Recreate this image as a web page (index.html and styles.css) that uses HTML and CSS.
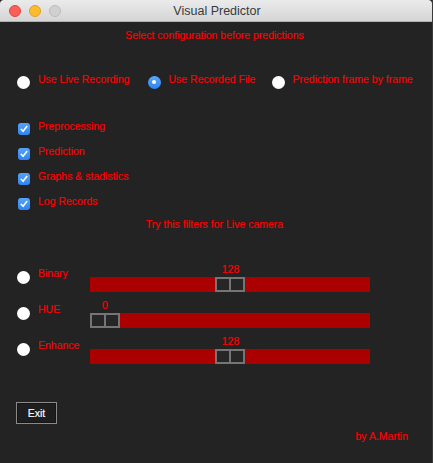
FILE: index.html
```html
<!DOCTYPE html>
<html>
<head>
<meta charset="utf-8">
<title>Visual Predictor</title>
<link rel="stylesheet" href="styles.css">
</head>
<body>
<div class="window">
  <header class="titlebar">
    <div class="lights">
      <span class="light red"></span>
      <span class="light yellow"></span>
      <span class="light gray"></span>
    </div>
    <div class="title">Visual Predictor</div>
    <div></div>
  </header>
  <main class="content">
    <p class="heading">Select configuration before predictions</p>

    <div class="modes">
      <div class="opt"><span class="radio"></span><span class="txt">Use Live Recording</span></div>
      <div class="opt"><span class="radio on"></span><span class="txt">Use Recorded File</span></div>
      <div class="opt"><span class="radio"></span><span class="txt">Prediction frame by frame</span></div>
    </div>

    <ul class="checks">
      <li class="check"><span class="box"><svg viewBox="0 0 12 12" width="12" height="12"><path d="M3.2 6.3 L5.1 8.3 L8.8 3.6" fill="none" stroke="#fff" stroke-width="1.6" stroke-linecap="round" stroke-linejoin="round"/></svg></span><span class="txt">Preprocessing</span></li>
      <li class="check"><span class="box"><svg viewBox="0 0 12 12" width="12" height="12"><path d="M3.2 6.3 L5.1 8.3 L8.8 3.6" fill="none" stroke="#fff" stroke-width="1.6" stroke-linecap="round" stroke-linejoin="round"/></svg></span><span class="txt">Prediction</span></li>
      <li class="check"><span class="box"><svg viewBox="0 0 12 12" width="12" height="12"><path d="M3.2 6.3 L5.1 8.3 L8.8 3.6" fill="none" stroke="#fff" stroke-width="1.6" stroke-linecap="round" stroke-linejoin="round"/></svg></span><span class="txt">Graphs &amp; stadistics</span></li>
      <li class="check"><span class="box"><svg viewBox="0 0 12 12" width="12" height="12"><path d="M3.2 6.3 L5.1 8.3 L8.8 3.6" fill="none" stroke="#fff" stroke-width="1.6" stroke-linecap="round" stroke-linejoin="round"/></svg></span><span class="txt">Log Records</span></li>
    </ul>

    <p class="heading filters-title">Try this filters for Live camera</p>

    <div class="filters">
      <div class="filter">
        <div class="filter-label"><span class="radio"></span><span class="txt">Binary</span></div>
        <div class="slider" style="--v: 128">
          <div class="value">128</div>
          <div class="trough"><div class="handle"></div></div>
        </div>
      </div>
      <div class="filter">
        <div class="filter-label"><span class="radio"></span><span class="txt">HUE</span></div>
        <div class="slider" style="--v: 0">
          <div class="value">0</div>
          <div class="trough"><div class="handle"></div></div>
        </div>
      </div>
      <div class="filter">
        <div class="filter-label"><span class="radio"></span><span class="txt">Enhance</span></div>
        <div class="slider" style="--v: 128">
          <div class="value">128</div>
          <div class="trough"><div class="handle"></div></div>
        </div>
      </div>
    </div>

    <button class="exit">Exit</button>
    <div class="author">by A.Martin</div>
  </main>
</div>
</body>
</html>
```

FILE: styles.css
```css
* { box-sizing: border-box; }

html, body {
  margin: 0;
  padding: 0;
  background: #232323;
}

body {
  font-family: "Liberation Sans", Arial, sans-serif;
  font-size: 10.5px;
  color: #ff0000;
}

.window {
  width: 433px;
  height: 463px;
  background: #232323;
  border-right: 1px solid #3a3a3a;
  overflow: hidden;
}

.titlebar {
  height: 22px;
  display: grid;
  grid-template-columns: 1fr auto 1fr;
  align-items: center;
  background: linear-gradient(#ebebeb, #d5d5d5);
  border-bottom: 1px solid #b1b1b1;
  border-radius: 4px 4px 0 0;
}

.lights {
  display: flex;
  gap: 8px;
  padding-left: 9px;
}

.light {
  width: 12px;
  height: 12px;
  border-radius: 50%;
}
.light.red { background: #fc5f57; border: 0.5px solid #de4640; }
.light.yellow { background: #fdbc2e; border: 0.5px solid #dea123; }
.light.gray { background: #d0d0d0; border: 0.5px solid #bcbcbc; }

.title {
  font-size: 12.5px;
  color: #3a3a3a;
  padding-left: 2px;
}

.content {
  padding: 6px 0 0 17px;
}

.heading {
  margin: 0;
  line-height: 14px;
  text-align: center;
  padding-right: 20px;
  -webkit-text-stroke: 0.15px #ff0000;
}

.txt {
  line-height: 13px;
  white-space: nowrap;
  -webkit-text-stroke: 0.15px #ff0000;
}

.modes {
  margin-top: 30.5px;
  display: grid;
  grid-template-columns: 130.5px 124px auto;
  align-items: start;
}

.opt {
  display: flex;
  align-items: flex-start;
  gap: 8px;
}

.radio {
  flex: none;
  width: 13px;
  height: 13px;
  border-radius: 50%;
  background: radial-gradient(circle at 50% 40%, #ffffff 55%, #ececec 100%);
  margin-top: 3px;
  display: flex;
  align-items: center;
  justify-content: center;
}

.radio.on {
  background: linear-gradient(#5aa8fb, #2e83f2);
}
.radio.on::after {
  content: "";
  width: 4px;
  height: 4px;
  border-radius: 50%;
  background: #fff;
}

.checks {
  list-style: none;
  margin: 31px 0 0 0;
  padding: 0 0 0 1px;
  display: flex;
  flex-direction: column;
  gap: 9.5px;
}

.check {
  display: flex;
  align-items: flex-start;
  gap: 8px;
}

.box {
  flex: none;
  width: 12px;
  height: 12px;
  border-radius: 3px;
  background: linear-gradient(#55a3fa, #2f84f2);
  margin-top: 3.5px;
  display: flex;
}

.filters-title {
  margin-top: 7px;
}

.filters {
  margin-top: 32px;
  display: flex;
  flex-direction: column;
  gap: 7px;
}

.filter {
  display: flex;
  align-items: flex-start;
}

.filter-label {
  width: 73px;
  display: flex;
  align-items: flex-start;
  gap: 8px;
}
.filter-label .radio { margin-top: 7.5px; }
.filter-label .txt { margin-top: 3.5px; }

.slider {
  width: 280px;
}

.value {
  width: 30px;
  margin-left: calc((100% - 30px) * var(--v) / 255);
  text-align: center;
  line-height: 13px;
  -webkit-text-stroke: 0.15px #ff0000;
}

.trough {
  margin-top: 1px;
  height: 15px;
  background: #aa0000;
  position: relative;
}

.handle {
  position: absolute;
  top: 0;
  left: calc((100% - 30px) * var(--v) / 255);
  width: 30px;
  height: 15px;
  border: 2px solid #757575;
  background: #262626;
}
.handle::after {
  content: "";
  position: absolute;
  left: 12px;
  top: 0;
  width: 2px;
  height: 11px;
  background: #757575;
}

.exit {
  display: block;
  margin: 38px 0 0 -1px;
  width: 41px;
  height: 22px;
  padding: 0;
  background: #1e1e1e;
  border: 1px solid #8a8a8a;
  box-shadow: inset 0 0 0 1px #151515;
  color: #ffffff;
  font-family: "Liberation Sans", Arial, sans-serif;
  font-size: 10.5px;
  -webkit-text-stroke: 0.15px #ffffff;
}

.author {
  margin-top: 5.5px;
  line-height: 13px;
  text-align: right;
  padding-right: 24px;
  -webkit-text-stroke: 0.15px #ff0000;
}
```
